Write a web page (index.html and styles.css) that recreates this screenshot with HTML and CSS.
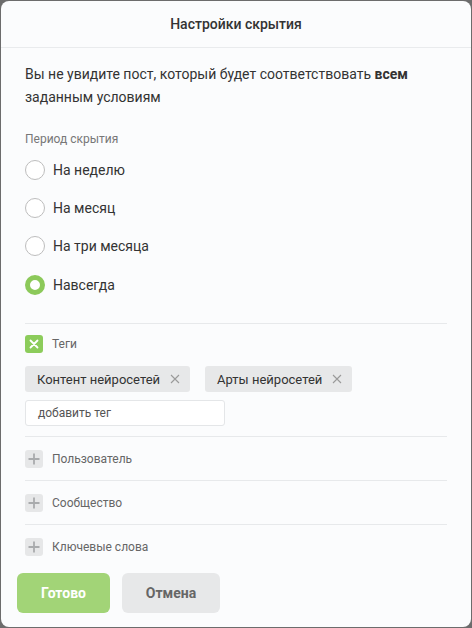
FILE: index.html
```html
<!DOCTYPE html>
<html lang="ru">
<head>
<meta charset="utf-8">
<link rel="stylesheet" href="styles.css">
</head>
<body>
<div class="modal">
  <div class="header">Настройки скрытия</div>
  <div class="content">
    <p class="desc">Вы не увидите пост, который будет соответствовать <b>всем</b> заданным условиям</p>
    <div class="caption">Период скрытия</div>
    <div class="radios">
      <div class="radio"><span class="circle"></span><span>На неделю</span></div>
      <div class="radio"><span class="circle"></span><span>На месяц</span></div>
      <div class="radio"><span class="circle"></span><span>На три месяца</span></div>
      <div class="radio"><span class="circle on"></span><span>Навсегда</span></div>
    </div>
    <div class="section tags-section">
      <div class="check-row">
        <span class="box green"><svg width="10" height="10" viewBox="0 0 10 10"><path d="M1.5 1.5l7 7M8.5 1.5l-7 7" stroke="#fff" stroke-width="1.8" stroke-linecap="round"/></svg></span>
        <span class="check-label">Теги</span>
      </div>
      <div class="tags">
        <span class="tag">Контент нейросетей<svg class="x" width="10" height="10" viewBox="0 0 10 10"><path d="M1 1l8 8M9 1l-8 8" stroke="#9a9a9a" stroke-width="1.1"/></svg></span>
        <span class="tag">Арты нейросетей<svg class="x" width="10" height="10" viewBox="0 0 10 10"><path d="M1 1l8 8M9 1l-8 8" stroke="#9a9a9a" stroke-width="1.1"/></svg></span>
      </div>
      <div class="input">добавить тег</div>
    </div>
    <div class="section">
      <div class="check-row">
        <span class="box gray"><svg width="12" height="12" viewBox="0 0 12 12"><path d="M6 0.5v11M0.5 6h11" stroke="#a9abad" stroke-width="1.8"/></svg></span>
        <span class="check-label">Пользователь</span>
      </div>
    </div>
    <div class="section">
      <div class="check-row">
        <span class="box gray"><svg width="12" height="12" viewBox="0 0 12 12"><path d="M6 0.5v11M0.5 6h11" stroke="#a9abad" stroke-width="1.8"/></svg></span>
        <span class="check-label">Сообщество</span>
      </div>
    </div>
    <div class="section">
      <div class="check-row">
        <span class="box gray"><svg width="12" height="12" viewBox="0 0 12 12"><path d="M6 0.5v11M0.5 6h11" stroke="#a9abad" stroke-width="1.8"/></svg></span>
        <span class="check-label">Ключевые слова</span>
      </div>
    </div>
  </div>
  <div class="footer">
    <button class="btn ok">Готово</button>
    <button class="btn cancel">Отмена</button>
  </div>
</div>
</body>
</html>
```
FILE: styles.css
```css
* { box-sizing: border-box; }
html, body { margin: 0; padding: 0; }
body {
  background: #6c6c6c;
  padding: 1px 1px 1px 1px;
  font-family: Roboto, "Liberation Sans", sans-serif;
  color: #333;
  width: 472px;
  height: 628px;
  overflow: hidden;
}
.modal {
  background: #fbfcfd;
  border-radius: 8px;
  width: 470px;
  height: 626px;
  display: flex;
  flex-direction: column;
}
.header {
  height: 47px;
  border-bottom: 1px solid #e9ebed;
  display: flex;
  align-items: center;
  justify-content: center;
  font-size: 14px;
  font-weight: 500;
  color: #333;
}
.content {
  padding: 15px 24px 0 24px;
}
.desc {
  margin: 0;
  font-size: 14px;
  line-height: 23px;
  color: #333;
}
.desc b { font-weight: 700; }
.caption {
  margin-top: 22px;
  font-size: 12px;
  line-height: 16px;
  color: #777;
}
.radios {
  margin-top: 13px;
  display: flex;
  flex-direction: column;
  gap: 18px;
  padding-bottom: 28px;
}
.radio {
  display: flex;
  align-items: center;
  gap: 8px;
  height: 20px;
  font-size: 14px;
  color: #333;
}
.radio:nth-child(4) { margin-top: 1px; }
.circle {
  width: 20px;
  height: 20px;
  border-radius: 50%;
  border: 1px solid #bdbdbd;
  background: #fff;
  flex: none;
}
.circle.on {
  border: 5px solid #8cc95a;
}
.section {
  border-top: 1px solid #e7e9eb;
  padding: 13px 0 12px;
}
.check-row {
  display: flex;
  align-items: center;
  gap: 9px;
  height: 18px;
}
.box {
  width: 18px;
  height: 18px;
  border-radius: 3px;
  display: flex;
  align-items: center;
  justify-content: center;
  flex: none;
}
.box.green { background: #8ccc5b; }
.box.gray { background: #e6e7e8; }
.check-label {
  font-size: 12px;
  color: #666;
}
.tags {
  margin-top: 13px;
  display: flex;
  gap: 15px;
}
.tag {
  height: 26px;
  background: #e7e8e9;
  border-radius: 3px;
  padding: 0 10px 0 12px;
  display: flex;
  align-items: center;
  gap: 10px;
  font-size: 13px;
  color: #333;
}
.x { flex: none; }
.input {
  margin-top: 8px;
  width: 200px;
  height: 26px;
  border: 1px solid #e4e6e8;
  border-radius: 3px;
  background: #fff;
  padding: 0 12px;
  display: flex;
  align-items: center;
  font-size: 12px;
  color: #555;
}
.section.tags-section { padding: 11px 0 10px; }
.footer {
  margin-top: auto;
  padding: 0 16px 14px 16px;
  display: flex;
  gap: 12px;
}
.btn {
  height: 40px;
  border: none;
  border-radius: 6px;
  font-family: Roboto, "Liberation Sans", sans-serif;
  font-size: 14px;
  font-weight: 700;
  padding: 0;
}
.btn.ok {
  width: 93px;
  background: #a2d477;
  color: #fff;
}
.btn.cancel {
  width: 98px;
  background: #e7e8e9;
  color: #666;
}
```
